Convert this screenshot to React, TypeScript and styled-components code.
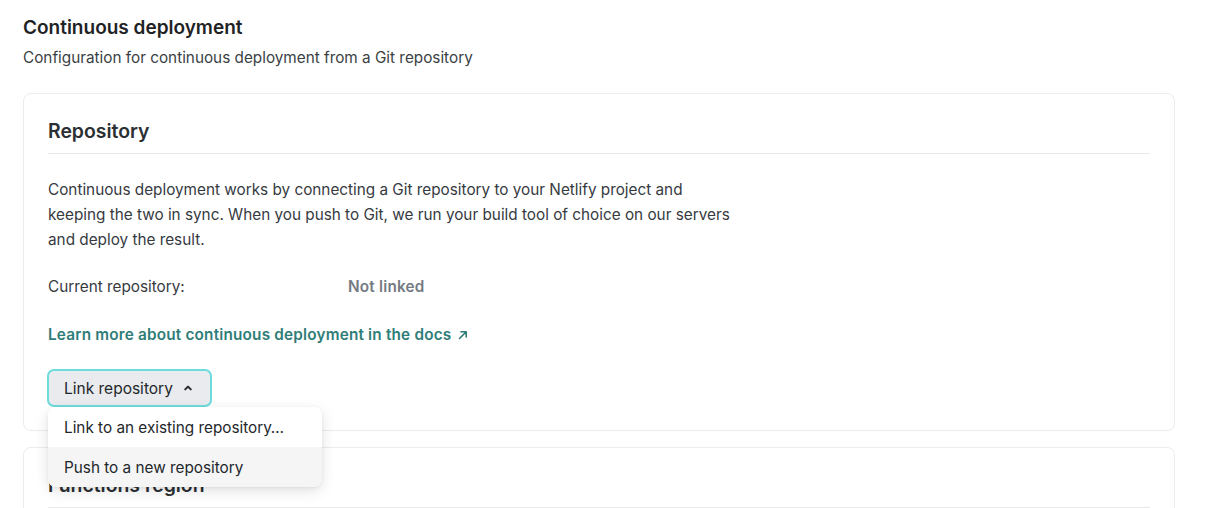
import React from "react";
import styled, { createGlobalStyle, css } from "styled-components";

const GlobalStyle = createGlobalStyle`
  html, body {
    margin: 0;
    padding: 0;
    background: #ffffff;
    font-family: Inter, "Noto Sans", "Liberation Sans", sans-serif;
    color: #2b2f33;
    -webkit-font-smoothing: antialiased;
  }
`;

const Page = styled.div`
  padding: 14px 23px 0 23px;
  width: 1152px;
  height: 494px;
  overflow: hidden;
`;

const PageTitle = styled.h1`
  margin: 0;
  font-size: 19px;
  line-height: 28px;
  font-weight: 600;
  color: #1f2326;
`;

const PageSubtitle = styled.p`
  margin: 2px 0 0;
  font-size: 15.3px;
  line-height: 28px;
  color: #3a3f44;
`;

const Cards = styled.div`
  margin-top: 21px;
  display: flex;
  flex-direction: column;
  gap: 16px;
`;

const Card = styled.section`
  border: 1px solid #ececec;
  border-radius: 8px;
  padding: 23px 24px 23px;
  position: relative;
`;

const CardHeader = styled.div`
  padding-bottom: 8px;
  border-bottom: 1px solid #e8e8e8;
`;

const CardTitle = styled.h2`
  margin: 0;
  font-size: 19.4px;
  line-height: 28px;
  font-weight: 600;
  color: #2b2f33;
`;

const Body = styled.p`
  margin: 23px 0 0;
  max-width: 690px;
  font-size: 15.3px;
  line-height: 25px;
  color: #363a3f;
`;

const InfoRow = styled.div`
  margin-top: 22px;
  display: grid;
  grid-template-columns: 300px auto;
  font-size: 15.3px;
  line-height: 25px;
`;

const InfoLabel = styled.span`
  color: #363a3f;
`;

const InfoValue = styled.span`
  color: #747a82;
  font-weight: 600;
  letter-spacing: 0.2px;
`;

const DocsLink = styled.a`
  margin-top: 23px;
  display: inline-flex;
  align-items: center;
  gap: 6px;
  font-size: 15.3px;
  line-height: 25px;
  font-weight: 600;
  letter-spacing: 0.2px;
  color: #2f7d78;
  text-decoration: none;
`;

const ButtonWrap = styled.div`
  margin: 22px 0 0 -1px;
  position: relative;
  display: inline-block;
`;

const LinkButton = styled.button`
  display: inline-flex;
  align-items: center;
  gap: 10px;
  height: 38px;
  padding: 0 17px 0 15px;
  border: 2px solid #6ddcdc;
  border-radius: 7px;
  background: #e9ebee;
  font-family: inherit;
  font-size: 15.5px;
  color: #23272b;
  cursor: pointer;
`;

const Menu = styled.ul`
  position: absolute;
  top: 38px;
  left: 1px;
  width: 274px;
  margin: 0;
  padding: 0;
  list-style: none;
  background: #ffffff;
  border-radius: 8px;
  box-shadow: 0 4px 14px rgba(0, 0, 0, 0.12), 0 1px 3px rgba(0, 0, 0, 0.06);
  overflow: hidden;
  z-index: 2;
`;

const MenuItem = styled.li<{ $active?: boolean }>(
  ({ $active }) => css`
    height: 40px;
    display: flex;
    align-items: center;
    padding: 0 16px;
    font-size: 15.3px;
    color: #23272b;
    background: ${$active ? "#f5f5f6" : "#ffffff"};
    white-space: nowrap;
  `
);

const Inline = styled.div`
  display: flex;
  flex-direction: column;
  align-items: flex-start;
`;

const ChevronUp = () => (
  <svg width="10" height="10" viewBox="0 0 10 10" fill="none">
    <path
      d="M2.2 6.4 5 3.6l2.8 2.8"
      stroke="#23272b"
      strokeWidth="2"
      strokeLinecap="round"
      strokeLinejoin="round"
    />
  </svg>
);

const ArrowUpRight = () => (
  <svg width="12" height="12" viewBox="0 0 12 12" fill="none">
    <path
      d="M2.5 9.5 9 3M4 2.8h5.2V8"
      stroke="#2f7d78"
      strokeWidth="1.6"
      strokeLinecap="round"
      strokeLinejoin="round"
    />
  </svg>
);

export default function App() {
  return (
    <>
      <GlobalStyle />
      <Page>
        <PageTitle>Continuous deployment</PageTitle>
        <PageSubtitle>
          Configuration for continuous deployment from a Git repository
        </PageSubtitle>
        <Cards>
          <Card>
            <CardHeader>
              <CardTitle>Repository</CardTitle>
            </CardHeader>
            <Body>
              Continuous deployment works by connecting a Git repository to your
              Netlify project and keeping the two in sync. When you push to Git,
              we run your build tool of choice on our servers and deploy the
              result.
            </Body>
            <InfoRow>
              <InfoLabel>Current repository:</InfoLabel>
              <InfoValue>Not linked</InfoValue>
            </InfoRow>
            <Inline>
              <DocsLink href="#">
                Learn more about continuous deployment in the docs
                <ArrowUpRight />
              </DocsLink>
              <ButtonWrap>
                <LinkButton>
                  Link repository
                  <ChevronUp />
                </LinkButton>
                <Menu>
                  <MenuItem>Link to an existing repository…</MenuItem>
                  <MenuItem $active>Push to a new repository</MenuItem>
                </Menu>
              </ButtonWrap>
            </Inline>
          </Card>
          <Card>
            <CardHeader>
              <CardTitle>Functions region</CardTitle>
            </CardHeader>
          </Card>
        </Cards>
      </Page>
    </>
  );
}
